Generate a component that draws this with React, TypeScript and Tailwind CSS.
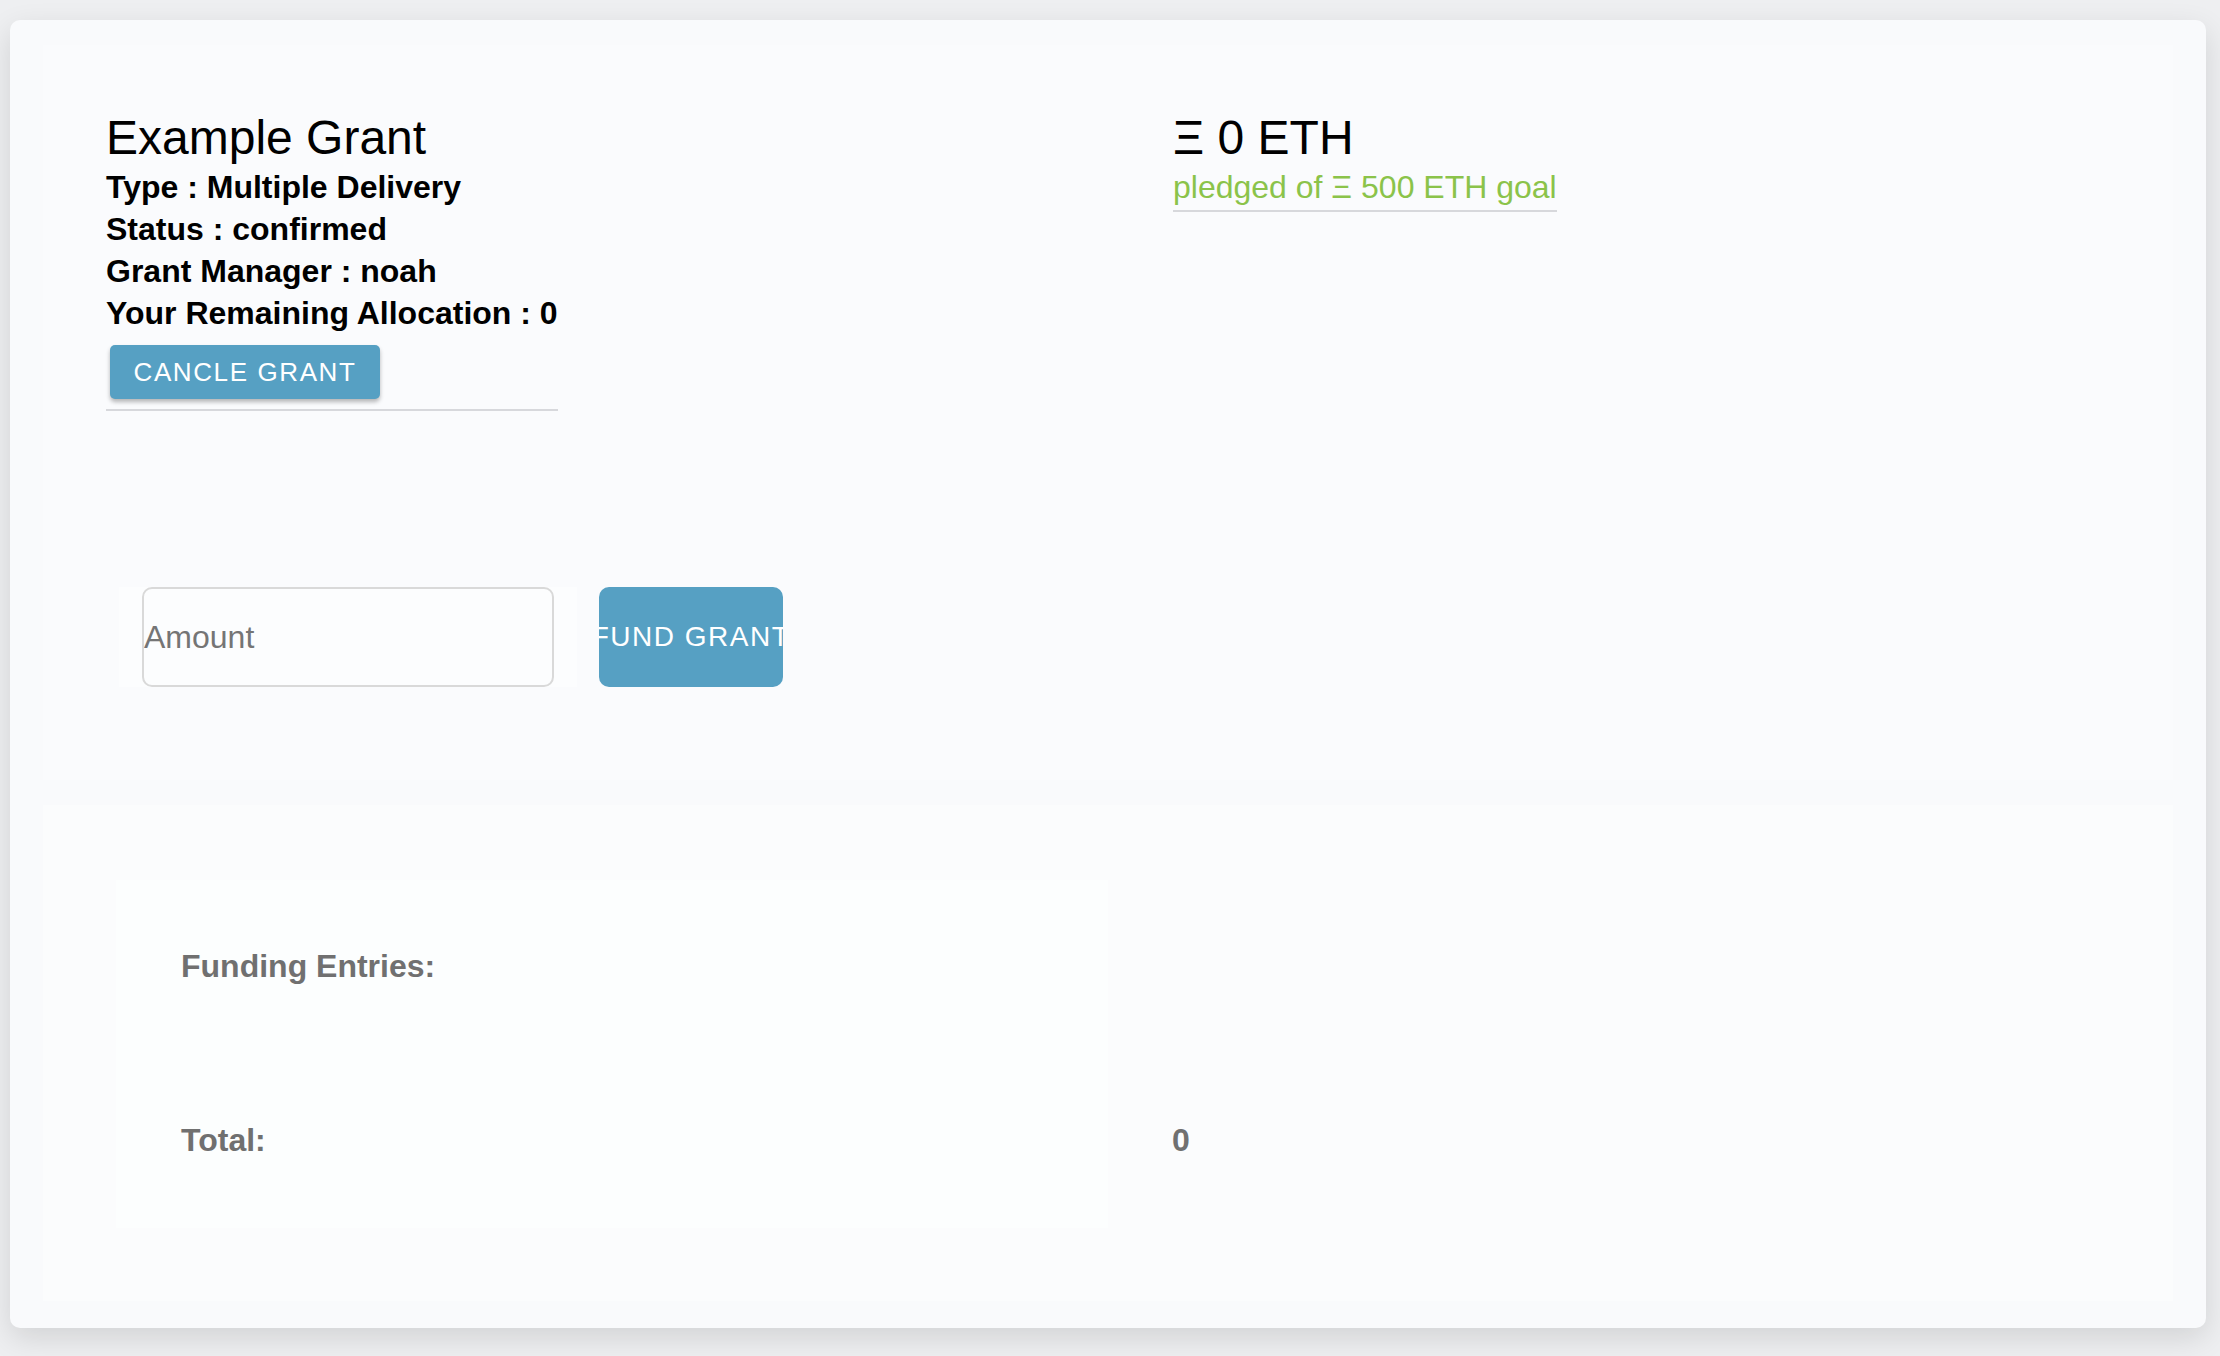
import React from 'react';

const font = { fontFamily: '"Liberation Sans", Arial, Helvetica, sans-serif' };

function GrantDetails() {
  return (
    <div className="flex flex-col items-start w-[1067px] shrink-0">
      <div className="border-b-2 border-[#d7d8dc] pb-[10px]">
        <h1 className="text-[48px] leading-[52px] font-normal text-black mb-[2px]">Example Grant</h1>
        <div className="text-[32px] leading-[42px] font-bold text-black">
          <div>Type : Multiple Delivery</div>
          <div>Status : confirmed</div>
          <div>Grant Manager : noah</div>
          <div>Your Remaining Allocation : 0</div>
        </div>
        <button className="mt-[11px] ml-[4px] h-[54px] w-[270px] rounded-[5px] bg-[#56a0c3] text-white text-[26px] tracking-[1.6px] uppercase shadow-[0_3px_4px_rgba(0,0,0,0.28)] flex items-center justify-center">
          Cancle Grant
        </button>
      </div>
    </div>
  );
}

function Pledged() {
  return (
    <div className="flex flex-col items-start">
      <div className="border-b-2 border-[#d7d8dc] pb-[2px]">
        <div className="text-[48px] leading-[52px] text-black mb-[2px]">Ξ 0 ETH</div>
        <div className="text-[32px] leading-[42px] text-[#8bc34a]">pledged of Ξ 500 ETH goal</div>
      </div>
    </div>
  );
}

function FundRow() {
  return (
    <div className="flex items-start mt-[176px] ml-[13px]">
      <div className="bg-[#fcfdfe] px-[23px] flex">
        <input
          placeholder="Amount"
          className="w-[412px] h-[100px] rounded-[10px] border-2 border-[#d9d9d9] bg-[#fcfdfe] px-0 text-[32px] text-[#333] placeholder:text-[#757575] outline-none"
          style={font}
        />
      </div>
      <button className="ml-[22px] w-[184px] h-[100px] rounded-[10px] bg-[#56a0c3] text-white text-[28px] tracking-[1.5px] overflow-hidden flex items-center justify-center whitespace-nowrap">
        <span className="shrink-0">FUND GRANT</span>
      </button>
    </div>
  );
}

function FundingEntries() {
  return (
    <div className="flex items-stretch">
      <div className="w-[992px] h-[348px] bg-[#fcfefe] flex flex-col pl-[65px] pt-[65px] pb-[67px] text-[32px] leading-[42px] font-bold text-[#707070]">
        <div>Funding Entries:</div>
        <div className="mt-auto">Total:</div>
      </div>
      <div className="flex flex-col justify-end pb-[67px] ml-[64px] text-[32px] leading-[42px] font-bold text-[#707070]">
        <div>0</div>
      </div>
    </div>
  );
}

export default function App() {
  return (
    <div className="min-h-screen w-full bg-[#eeeff1] pt-[20px] pl-[10px] pr-[14px] pb-[28px]" style={font}>
      <div className="h-[1308px] rounded-[10px] bg-[#f9fafc] shadow-[0_10px_30px_rgba(0,0,0,0.12)] pt-[25px] px-[33px] flex flex-col gap-[25px]">
        <div className="h-[735px] bg-[#fafbfd] pl-[63px] pt-[67px]">
          <div className="flex items-start">
            <GrantDetails />
            <Pledged />
          </div>
          <FundRow />
        </div>
        <div className="h-[496px] bg-[#fbfcfd] pl-[73px] pt-[75px]">
          <FundingEntries />
        </div>
      </div>
    </div>
  );
}
